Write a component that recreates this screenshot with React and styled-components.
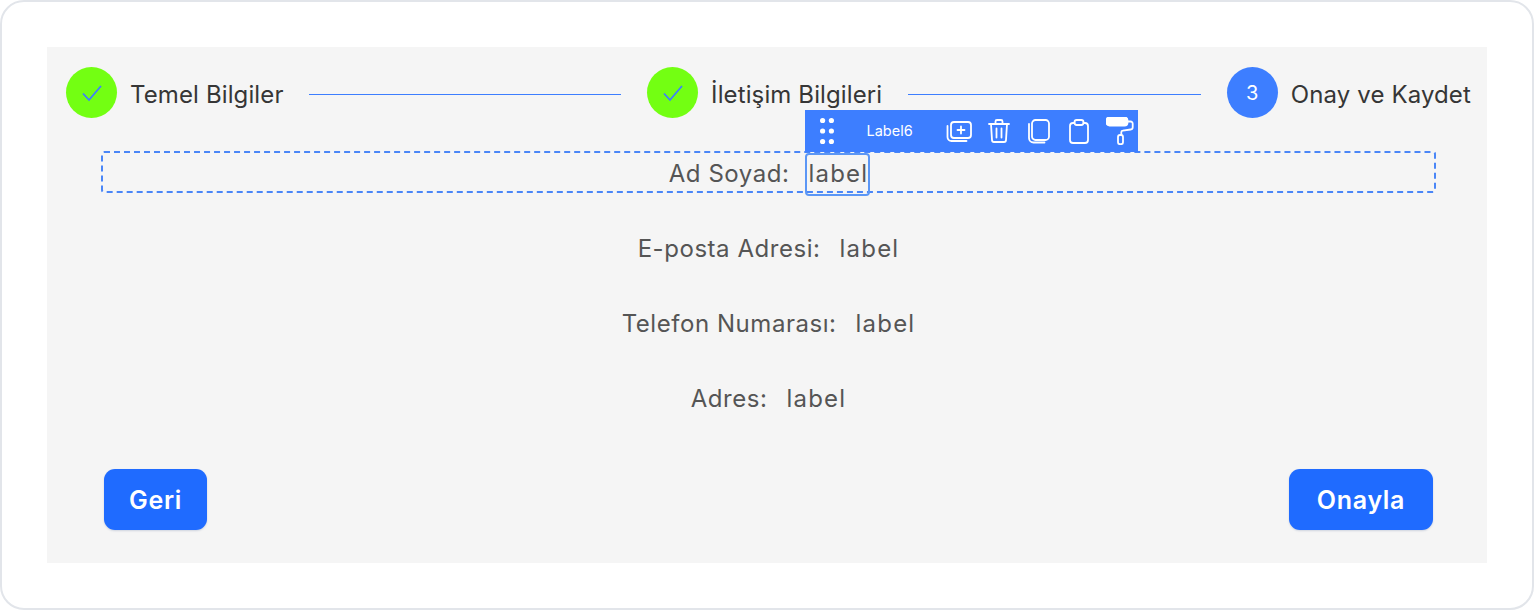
import React from "react";
import styled, { createGlobalStyle } from "styled-components";

const GlobalStyle = createGlobalStyle`
    * {
        box-sizing: border-box;
    }

    html, body {
        margin: 0;
        padding: 0;
        background: #ffffff;
    }
`;

const Frame = styled.div`
    width: 1534px;
    height: 610px;
    padding: 45px;
    background: #ffffff;
    border: 2px solid #e2e5ea;
    border-radius: 24px;
    overflow: hidden;
`;

const Panel = styled.main`
    display: flex;
    flex-direction: column;
    width: 1440px;
    height: 516px;
    padding: 20px 16px 33px 19px;
    background: #f5f5f5;
`;

const Stepper = styled.div`
    display: flex;
    align-items: center;
    justify-content: space-between;
    height: 51px;
`;

const Step = styled.div`
    display: flex;
    align-items: center;
    gap: 13px;
    flex: none;
`;

const StepCircle = styled.div`
    display: flex;
    align-items: center;
    justify-content: center;
    width: 51px;
    height: 51px;
    border-radius: 50%;
    background: ${({ $done }) => ($done ? "#73ff12" : "#3d7eff")};
    color: #ffffff;
    font-family: Inter, sans-serif;
    font-size: 20px;
`;

const StepTitle = styled.span`
    padding-top: 3px;
    font-family: Inter, sans-serif;
    font-size: 24px;
    letter-spacing: 0.12px;
    color: #363636;
    white-space: nowrap;
`;

const StepLine = styled.div`
    flex: none;
    width: ${({ $length }) => $length}px;
    height: 1px;
    margin-top: 3px;
    background: #3d7eff;
`;

const Fields = styled.div`
    display: flex;
    flex-direction: column;
    gap: 33px;
    margin: 33px 35px 0 35px;
`;

const FieldRow = styled.div`
    display: flex;
    align-items: center;
    justify-content: center;
    gap: 19px;
    height: 42px;
    padding-top: 4px;
    border: ${({ $selected }) => ($selected ? "2px dashed #4a86f7" : "none")};
    border-radius: 3px;
    font-family: Inter, sans-serif;
    font-size: 24px;
    line-height: 42px;
    letter-spacing: 0.55px;
    color: #555555;
`;

const FieldValue = styled.span`
    position: relative;
    letter-spacing: 1.2px;
`;

const ValueOutline = styled.span`
    position: absolute;
    top: 0;
    left: -3px;
    right: -2px;
    height: 43px;
    border: 2px solid #5b96f5;
    border-radius: 4px;
`;

const Toolbar = styled.div`
    position: absolute;
    left: -3px;
    bottom: 43px;
    display: flex;
    align-items: center;
    width: 333px;
    height: 42px;
    padding-left: 15px;
    background: #3d7eff;
    color: #ffffff;
    font-family: Inter, sans-serif;
    font-size: 14.5px;
    letter-spacing: 0;
    line-height: 1;
`;

const ToolbarName = styled.span`
    margin: 0 33px 0 32px;
`;

const ToolbarIcons = styled.div`
    display: flex;
    align-items: center;
    gap: 14px;
`;

const ToolIcon = styled.svg`
    display: block;
    width: 26px;
    height: 26px;
    fill: none;
    stroke: #ffffff;
    stroke-width: 1.8;
    stroke-linecap: round;
    stroke-linejoin: round;
`;

const Actions = styled.div`
    display: flex;
    justify-content: space-between;
    margin: auto 38px 0 38px;
`;

const ActionButton = styled.button`
    height: 61px;
    width: ${({ $wide }) => ($wide ? "144px" : "103px")};
    padding: 0;
    border: none;
    border-radius: 11px;
    background: #1f6bff;
    color: #ffffff;
    font-family: Inter, sans-serif;
    font-size: 25px;
    font-weight: 600;
    letter-spacing: 0.7px;
    box-shadow: 0 1px 2px rgba(31, 60, 120, 0.18);
`;

const Check = () => (
    <svg width="22" height="18" viewBox="0 0 22 18" fill="none" stroke="#3d7eff" strokeWidth="1.8">
        <path d="M2 9.5 L8 16 L20 2" />
    </svg>
);

const DragDots = () => (
    <svg width="14" height="28" viewBox="0 0 14 28" fill="#ffffff">
        <circle cx="2.6" cy="3.5" r="2.6" />
        <circle cx="11.4" cy="3.5" r="2.6" />
        <circle cx="2.6" cy="14" r="2.6" />
        <circle cx="11.4" cy="14" r="2.6" />
        <circle cx="2.6" cy="24.5" r="2.6" />
        <circle cx="11.4" cy="24.5" r="2.6" />
    </svg>
);

const AddIcon = () => (
    <ToolIcon viewBox="0 0 26 26">
        <rect x="5" y="4" width="20" height="16" rx="3" />
        <path d="M1.5 8v11a4 4 0 0 0 4 4h15" />
        <path d="M15 8.5v7M11.5 12h7" />
    </ToolIcon>
);

const TrashIcon = () => (
    <ToolIcon viewBox="0 0 26 26">
        <path d="M3 6h20" />
        <path d="M9.5 5.5V3.5a1.5 1.5 0 0 1 1.5-1.5h4a1.5 1.5 0 0 1 1.5 1.5v2" />
        <path d="M5 6l1 16a2 2 0 0 0 2 2h10a2 2 0 0 0 2-2l1-16" />
        <path d="M10.5 10.5v9M15.5 10.5v9" />
    </ToolIcon>
);

const CopyIcon = () => (
    <ToolIcon viewBox="0 0 26 26">
        <rect x="6" y="2" width="17" height="20" rx="3.5" />
        <path d="M3 6v14a4.5 4.5 0 0 0 4.5 4.5h11" />
    </ToolIcon>
);

const PasteIcon = () => (
    <ToolIcon viewBox="0 0 26 26">
        <path d="M8.5 5H7a3 3 0 0 0-3 3v14a3 3 0 0 0 3 3h12a3 3 0 0 0 3-3V8a3 3 0 0 0-3-3h-1.5" />
        <rect x="8.5" y="2" width="9" height="5" rx="2.2" />
    </ToolIcon>
);

const RollerIcon = () => (
    <svg width="28" height="28" viewBox="0 0 28 28" fill="none" stroke="#ffffff" strokeWidth="1.8">
        <rect x="0.5" y="0.5" width="21" height="8" rx="3" fill="#ffffff" />
        <path d="M22 4.5h2.5a2.2 2.2 0 0 1 2.2 2.2v3.6a2.2 2.2 0 0 1-2 2.2l-8 1.2a1.6 1.6 0 0 0-1.4 1.6V18" />
        <rect x="12" y="18" width="5" height="9.2" rx="2" />
    </svg>
);

const fields = [
    { name: "Ad Soyad:", selected: true },
    { name: "E-posta Adresi:" },
    { name: "Telefon Numarası:" },
    { name: "Adres:" },
];

const App = () => {
    return (
        <Frame>
            <GlobalStyle />
            <Panel>
                <Stepper>
                    <Step>
                        <StepCircle $done><Check /></StepCircle>
                        <StepTitle>Temel Bilgiler</StepTitle>
                    </Step>
                    <StepLine $length={312} />
                    <Step>
                        <StepCircle $done><Check /></StepCircle>
                        <StepTitle>İletişim Bilgileri</StepTitle>
                    </Step>
                    <StepLine $length={293} />
                    <Step>
                        <StepCircle>3</StepCircle>
                        <StepTitle>Onay ve Kaydet</StepTitle>
                    </Step>
                </Stepper>

                <Fields>
                    {fields.map((field) => (
                        <FieldRow key={field.name} $selected={field.selected}>
                            <span>{field.name}</span>
                            <FieldValue>
                                label
                                {field.selected && <ValueOutline />}
                                {field.selected && (
                                    <Toolbar>
                                        <DragDots />
                                        <ToolbarName>Label6</ToolbarName>
                                        <ToolbarIcons>
                                            <AddIcon />
                                            <TrashIcon />
                                            <CopyIcon />
                                            <PasteIcon />
                                            <RollerIcon />
                                        </ToolbarIcons>
                                    </Toolbar>
                                )}
                            </FieldValue>
                        </FieldRow>
                    ))}
                </Fields>

                <Actions>
                    <ActionButton>Geri</ActionButton>
                    <ActionButton $wide>Onayla</ActionButton>
                </Actions>
            </Panel>
        </Frame>
    );
};

export default App;
